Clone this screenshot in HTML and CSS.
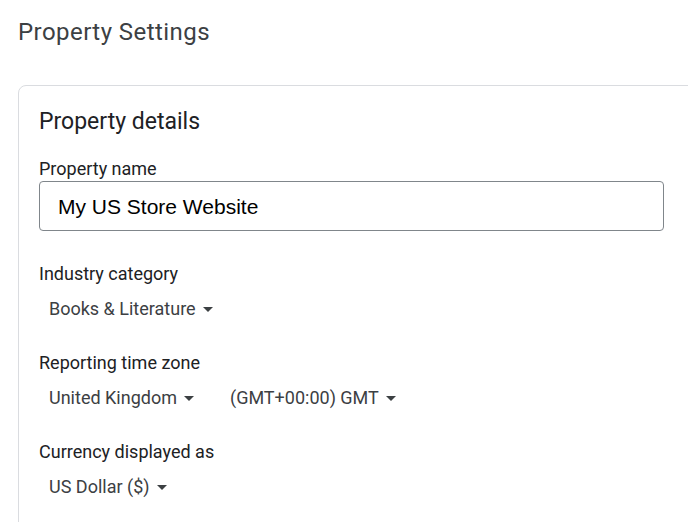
FILE: index.html
```html
<!DOCTYPE html>
<html lang="en">
<head>
<meta charset="utf-8">
<title>Property Settings</title>
<link rel="stylesheet" href="styles.css">
</head>
<body>
  <h1 class="page-title">Property Settings</h1>
  <section class="card">
    <h2 class="card-title">Property details</h2>
    <div class="field field-input">
      <label class="field-label" for="pname">Property name</label>
      <input class="text-input" id="pname" type="text" value="My US Store Website">
    </div>
    <div class="field">
      <div class="field-label">Industry category</div>
      <div class="select-row">
        <button class="select" type="button">Books &amp; Literature<span class="caret"></span></button>
      </div>
    </div>
    <div class="field">
      <div class="field-label">Reporting time zone</div>
      <div class="select-row">
        <button class="select" type="button">United Kingdom<span class="caret"></span></button>
        <button class="select" type="button">(GMT+00:00) GMT<span class="caret"></span></button>
      </div>
    </div>
    <div class="field">
      <div class="field-label">Currency displayed as</div>
      <div class="select-row">
        <button class="select" type="button">US Dollar ($)<span class="caret"></span></button>
      </div>
    </div>
  </section>
</body>
</html>
```

FILE: styles.css
```css
html, body {
  margin: 0;
  padding: 0;
  background: #ffffff;
  overflow: hidden;
}

body {
  padding-left: 18px;
  font-family: Roboto, "Liberation Sans", Arial, sans-serif;
  color: #202124;
}

.page-title {
  margin: 0;
  padding-top: 18px;
  font-size: 24px;
  line-height: 28px;
  letter-spacing: 0.45px;
  font-weight: 400;
  color: #3c4043;
}

.card {
  margin-top: 39px;
  width: 720px;
  border: 1px solid #dadce0;
  border-radius: 8px;
  padding: 22px 20px 40px;
  box-sizing: border-box;
  display: flex;
  flex-direction: column;
}

.card-title {
  margin: 0 0 21px;
  font-size: 23px;
  line-height: 28px;
  font-weight: 400;
  color: #202124;
}

.field {
  display: flex;
  flex-direction: column;
  margin-bottom: 24px;
}

.field-input {
  margin-bottom: 31px;
}

.field-label {
  font-size: 18px;
  line-height: 24px;
  color: #202124;
}

.text-input {
  width: 625px;
  height: 50px;
  box-sizing: border-box;
  border: 1px solid #80868b;
  border-radius: 4px;
  padding: 2px 18px 0;
  font-family: "Liberation Sans", Arial, sans-serif;
  font-size: 21px;
  color: #000000;
  background: #ffffff;
  outline: none;
}

.select-row {
  display: flex;
  gap: 16px;
  margin-top: 5px;
}

.select {
  display: flex;
  align-items: center;
  height: 36px;
  padding: 0 10px;
  border: none;
  background: transparent;
  font-family: Roboto, "Liberation Sans", Arial, sans-serif;
  font-size: 18px;
  line-height: 24px;
  color: #3c4043;
  cursor: pointer;
}

.caret {
  width: 0;
  height: 0;
  margin-left: 7px;
  border-left: 5px solid transparent;
  border-right: 5px solid transparent;
  border-top: 5px solid #3c4043;
}
```
